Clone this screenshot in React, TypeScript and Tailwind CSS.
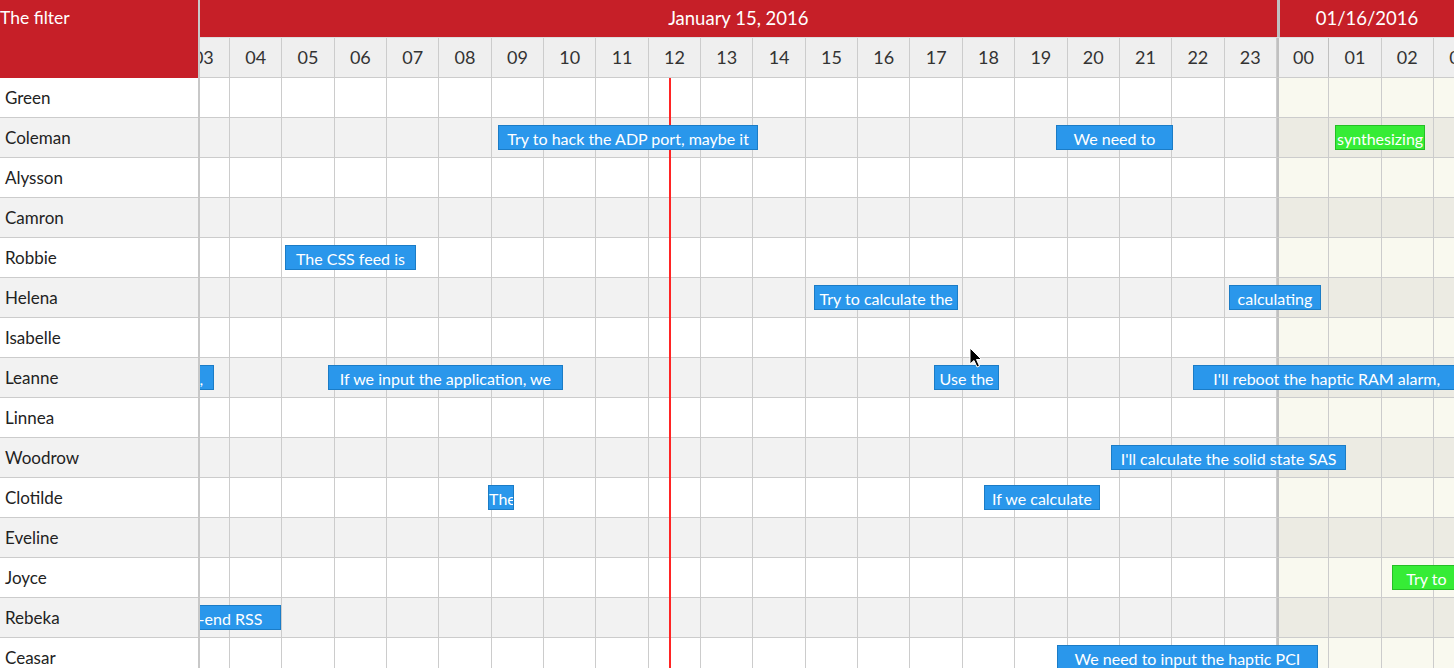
const COL_W = 52.35
const FIRST_HOUR = 3
const NOW = 12.386

const hours: { h: number; day2: boolean }[] = [
  ...Array.from({ length: 21 }, (_, i) => ({ h: i + 3, day2: false })),
  ...Array.from({ length: 5 }, (_, i) => ({ h: i, day2: true })),
]

const resources = [
  'Green', 'Coleman', 'Alysson', 'Camron', 'Robbie', 'Helena', 'Isabelle', 'Leanne',
  'Linnea', 'Woodrow', 'Clotilde', 'Eveline', 'Joyce', 'Rebeka', 'Ceasar',
]

type Ev = { row: string; from: number; to: number; text: string; green?: boolean }

// from / to in hours since day 1 00:00
const events: Ev[] = [
  { row: 'Coleman', from: 9.12, to: 14.09, text: 'Try to hack the ADP port, maybe it' },
  { row: 'Coleman', from: 19.78, to: 22.01, text: 'We need to' },
  { row: 'Coleman', from: 25.11, to: 26.83, text: 'synthesizing', green: true },
  { row: 'Robbie', from: 5.05, to: 7.55, text: 'The CSS feed is' },
  { row: 'Helena', from: 15.16, to: 17.91, text: 'Try to calculate the' },
  { row: 'Helena', from: 23.08, to: 24.84, text: 'calculating' },
  { row: 'Leanne', from: 1.58, to: 3.69, text: 'the protocol,' },
  { row: 'Leanne', from: 5.87, to: 10.36, text: 'If we input the application, we' },
  { row: 'Leanne', from: 17.45, to: 18.69, text: 'Use the' },
  { row: 'Leanne', from: 22.4, to: 27.5, text: "I'll reboot the haptic RAM alarm," },
  { row: 'Woodrow', from: 20.83, to: 25.32, text: "I'll calculate the solid state SAS" },
  { row: 'Clotilde', from: 8.93, to: 9.43, text: 'The' },
  { row: 'Clotilde', from: 18.4, to: 20.62, text: 'If we calculate' },
  { row: 'Joyce', from: 26.2, to: 27.51, text: 'Try to', green: true },
  { row: 'Rebeka', from: 2.43, to: 4.97, text: 'back-end RSS' },
  { row: 'Ceasar', from: 19.8, to: 24.78, text: 'We need to input the haptic PCI' },
]

const toX = (h: number) => (h - FIRST_HOUR) * COL_W

const pad = (n: number) => String(n).padStart(2, '0')

function Cursor() {
  return (
    <svg className="absolute left-[969px] top-[347px] z-30" width="14" height="22" viewBox="0 0 14 22">
      <path d="M1 1 L1 17 L5 13.5 L8 20 L10.5 19 L7.5 12.5 L12.5 12.5 Z" fill="#000" stroke="#fff" strokeWidth="1" strokeLinejoin="round" />
    </svg>
  )
}

export default function App() {
  return (
    <div className="relative flex w-[1454px] h-[668px] overflow-hidden bg-white font-[Lato,sans-serif] text-[#222]">
      {/* resource column */}
      <div className="w-[200px] shrink-0 border-r-2 border-[#c8c8c8]">
        <div className="h-[78px] bg-[#c61f28] text-white text-[17.5px] leading-[36px]">The filter</div>
        {resources.map((name, i) => (
          <div
            key={name}
            className={
              i % 2 === 1
                ? 'h-10 border-b border-[#ccc] bg-[#f2f2f2] pl-[5px] flex items-center text-[17px]'
                : 'h-10 border-b border-[#ccc] bg-white pl-[5px] flex items-center text-[17px]'
            }
          >
            {name}
          </div>
        ))}
      </div>

      {/* timeline */}
      <div className="relative flex-1 overflow-hidden">
        <div className="ml-[-22.35px]">
          {/* day header */}
          <div className="flex h-[38px] border-b border-[#ddd] bg-[#c61f28] text-white text-[18.5px]">
            <div className="w-[1099.35px] shrink-0 pl-[22px] flex items-center justify-center">January 15, 2016</div>
            <div className="w-[177px] shrink-0 border-l-[3px] border-[#c0c0c0] flex items-center justify-center">01/16/2016</div>
          </div>

          {/* hour header */}
          <div className="flex h-10 border-b border-[#ccc] bg-[#efefef]">
            {hours.map(({ h, day2 }) => (
              <div
                key={`${day2}-${h}`}
                className={
                  day2 && h === 0
                    ? 'w-[52.35px] shrink-0 border-l-2 border-r border-[#c0c0c0] flex items-center justify-center text-[18px] text-[#333]'
                    : 'w-[52.35px] shrink-0 border-r border-[#ccc] flex items-center justify-center text-[18px] text-[#333]'
                }
              >
                {pad(h)}
              </div>
            ))}
          </div>

          {/* rows */}
          <div className="relative">
            {resources.map((name, i) => (
              <div key={name} className="relative flex h-10 border-b border-[#ccc]">
                {hours.map(({ h, day2 }) => {
                  const odd = i % 2 === 1
                  let cls = 'w-[52.35px] shrink-0 h-full border-r border-[#ccc] '
                  if (day2) cls += odd ? 'bg-[#ecebe3]' : 'bg-[#f9f9ef]'
                  else cls += odd ? 'bg-[#f2f2f2]' : 'bg-white'
                  if (day2 && h === 0) cls += ' border-l-2 border-l-[#c0c0c0]'
                  return <div key={`${day2}-${h}`} className={cls} />
                })}
                {events
                  .filter((e) => e.row === name)
                  .map((e) => (
                    <div
                      key={e.text}
                      style={{ left: toX(e.from), width: toX(e.to) - toX(e.from) }}
                      className={
                        e.green
                          ? 'absolute top-[7px] h-[25px] z-10 overflow-hidden whitespace-nowrap border border-[#25bf25] bg-[#36ec36] text-white text-[16px] leading-[25px] text-center'
                          : 'absolute top-[7px] h-[25px] z-10 overflow-hidden whitespace-nowrap border border-[#1b7cc6] bg-[#2a97eb] text-white text-[16px] leading-[25px] text-center'
                      }
                    >
                      {e.text}
                    </div>
                  ))}
              </div>
            ))}
            {/* now line */}
            <div className="absolute top-0 bottom-0 w-[2px] bg-[#ff2424] z-[5]" style={{ left: toX(NOW) }} />
          </div>
        </div>
      </div>

      <Cursor />
    </div>
  )
}
